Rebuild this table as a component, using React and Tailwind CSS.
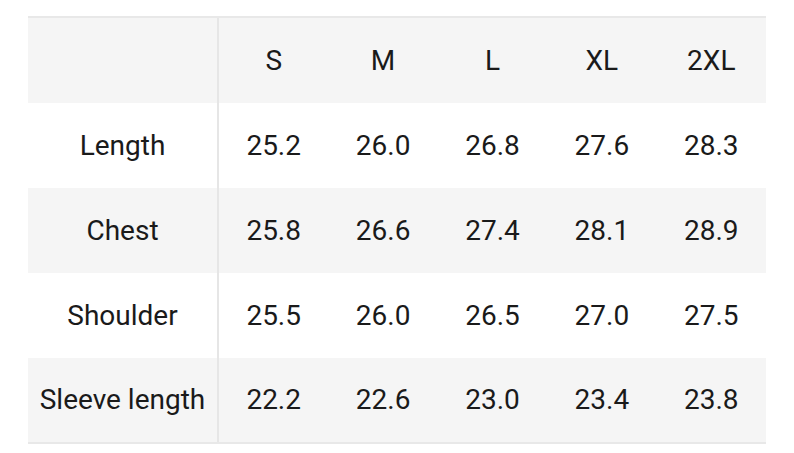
const sizes = ['S', 'M', 'L', 'XL', '2XL']

const rows = [
  { label: 'Length', values: ['25.2', '26.0', '26.8', '27.6', '28.3'] },
  { label: 'Chest', values: ['25.8', '26.6', '27.4', '28.1', '28.9'] },
  { label: 'Shoulder', values: ['25.5', '26.0', '26.5', '27.0', '27.5'] },
  { label: 'Sleeve length', values: ['22.2', '22.6', '23.0', '23.4', '23.8'] },
]

function Row({ label, cells, shaded, last }) {
  return (
    <div className={`grid grid-cols-[191px_repeat(5,1fr)] ${last ? 'h-[84px]' : 'h-[85px]'} ${shaded ? 'bg-[#f5f5f5]' : 'bg-white'}`}>
      <div className="flex items-center justify-center border-r-2 border-[#e6e6e6]">{label}</div>
      {cells.map((c, i) => (
        <div key={i} className="flex items-center justify-center">{c}</div>
      ))}
    </div>
  )
}

export default function App() {
  return (
    <div className="w-[794px] h-[453px] bg-white pt-[16px] pl-[28px] font-['Roboto',sans-serif] text-[28px] text-[#1a1a1a]">
      <div className="w-[738px] border-t-2 border-b-2 border-[#e8e8e8]">
        <Row label="" cells={sizes} shaded />
        {rows.map((r, i) => (
          <Row key={r.label} label={r.label} cells={r.values} shaded={i % 2 === 1} last={i === rows.length - 1} />
        ))}
      </div>
    </div>
  )
}
